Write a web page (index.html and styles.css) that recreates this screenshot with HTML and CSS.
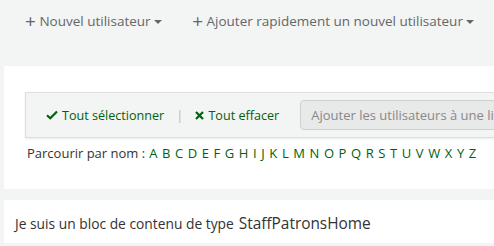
FILE: index.html
```html
<!DOCTYPE html>
<html lang="fr">
<head>
    <meta charset="UTF-8">
    <title>Adhérents</title>
    <link rel="stylesheet" href="styles.css">
</head>
<body>
    <div class="page">
        <div class="btn-toolbar">
            <a class="tool-btn" href="#"><span class="plus">+</span> Nouvel utilisateur <span class="caret"></span></a>
            <a class="tool-btn" href="#"><span class="plus">+</span> Ajouter rapidement un nouvel utilisateur <span class="caret"></span></a>
        </div>

        <div class="page-section search-section">
            <div class="selections-toolbar">
                <a class="sel-link" href="#">
                    <svg class="icon" width="12" height="10" viewBox="0 0 12 10"><path d="M1 5.2 L4.3 8.3 L11 1.5" fill="none" stroke="currentColor" stroke-width="2.2"/></svg>
                    Tout sélectionner
                </a>
                <span class="divider">|</span>
                <a class="sel-link" href="#">
                    <svg class="icon" width="9" height="9" viewBox="0 0 9 9"><path d="M1 1 L8 8 M8 1 L1 8" fill="none" stroke="currentColor" stroke-width="2.2"/></svg>
                    Tout effacer
                </a>
                <div class="select-box">Ajouter les utilisateurs à une liste</div>
            </div>
            <div class="browse">
                Parcourir par nom :
                <a href="#">A</a> <a href="#">B</a> <a href="#">C</a> <a href="#">D</a> <a href="#">E</a>
                <a href="#">F</a> <a href="#">G</a> <a href="#">H</a> <a href="#">I</a> <a href="#">J</a>
                <a href="#">K</a> <a href="#">L</a> <a href="#">M</a> <a href="#">N</a> <a href="#">O</a>
                <a href="#">P</a> <a href="#">Q</a> <a href="#">R</a> <a href="#">S</a> <a href="#">T</a>
                <a href="#">U</a> <a href="#">V</a> <a href="#">W</a> <a href="#">X</a> <a href="#">Y</a>
                <a href="#">Z</a>
            </div>
        </div>

        <div class="page-section content-block">
            Je suis un bloc de contenu de type <span class="block-type">StaffPatronsHome</span>
        </div>
    </div>
</body>
</html>
```

FILE: styles.css
```css
:root {
    --bg: #f3f4f4;
    --text: #333;
    --muted: #666;
    --link: #00620e;
    --border: #dcdddd;
}
body {
    margin: 0;
    background-color: var(--bg);
    font-family: "Open Sans", "Noto Sans", sans-serif;
    font-size: 13px;
    color: var(--text);
    overflow: hidden;
}
a {
    text-decoration: none;
}
.page {
    width: 620px;
    padding-left: 4px;
}
.btn-toolbar {
    display: flex;
    gap: 22px;
    padding: 10px 0 0 17px;
    height: 66px;
    box-sizing: border-box;
}
.tool-btn {
    color: var(--muted);
    font-size: 13.5px;
    line-height: 22px;
    padding: 0 4px;
    white-space: nowrap;
}
.plus {
    font-size: 19px;
    line-height: 20px;
    vertical-align: -2px;
}
.caret {
    display: inline-block;
    width: 0;
    height: 0;
    border-left: 4px solid transparent;
    border-right: 4px solid transparent;
    border-top: 4px solid var(--muted);
    vertical-align: middle;
}
.page-section {
    background-color: white;
    margin-bottom: 11px;
}
.search-section {
    padding: 26px 0 0 21px;
    height: 123px;
    box-sizing: border-box;
}
.selections-toolbar {
    display: flex;
    align-items: center;
    height: 46px;
    box-sizing: border-box;
    background-color: var(--bg);
    border: 1px solid var(--border);
    box-shadow: 0 1px 2px rgba(0,0,0,0.08);
    padding-left: 20px;
    white-space: nowrap;
}
.sel-link {
    display: flex;
    align-items: center;
    gap: 4px;
    color: var(--link);
    font-size: 12.6px;
}
.divider {
    color: #c8b98a;
    margin: 0 12px;
}
.select-box {
    margin-left: 21px;
    height: 30px;
    line-height: 28px;
    box-sizing: border-box;
    padding: 0 10px;
    width: 260px;
    background-color: #e8e9e9;
    border: 1px solid #cfd1d1;
    border-radius: 4px;
    color: #888;
    font-size: 13px;
}
.browse {
    margin-top: 6px;
    padding-left: 2px;
    font-size: 13px;
    white-space: nowrap;
}
.browse a {
    color: var(--link);
    padding: 0 0.6px;
}
.content-block {
    height: 43px;
    padding: 4px 0 0 11px;
    box-sizing: border-box;
    display: flex;
    align-items: center;
    font-size: 13.8px;
}
.block-type {
    font-size: 15.4px;
    margin-left: 5px;
}
```
